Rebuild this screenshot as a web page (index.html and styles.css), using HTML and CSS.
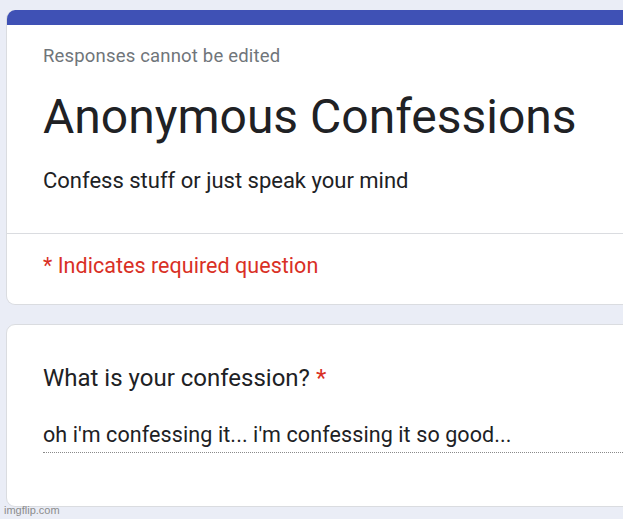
FILE: index.html
```html
<!DOCTYPE html>
<html>
<head>
<meta charset="utf-8">
<link rel="stylesheet" href="styles.css">
</head>
<body>
<div class="page">
  <div class="card header-card">
    <div class="accent"></div>
    <div class="header-body">
      <div class="note">Responses cannot be edited</div>
      <h1 class="title">Anonymous Confessions</h1>
      <div class="desc">Confess stuff or just speak your mind</div>
    </div>
    <div class="required-row">* Indicates required question</div>
  </div>
  <div class="card question-card">
    <div class="question">What is your confession? <span class="star">*</span></div>
    <div class="answer">oh i'm confessing it... i'm confessing it so good...</div>
  </div>
</div>
<div class="watermark">imgflip.com</div>
</body>
</html>
```
FILE: styles.css
```css
html, body {
  margin: 0;
  padding: 0;
  background: #eaedf6;
  overflow: hidden;
  font-family: Roboto, "Liberation Sans", sans-serif;
  color: #202124;
}
.page {
  padding: 10px 0 0 6px;
  display: flex;
  flex-direction: column;
  gap: 19px;
  width: 660px;
}
.card {
  background: #fff;
  border: 1px solid #dadce0;
  border-radius: 9px;
  overflow: hidden;
}
.header-card {
  border-top: none;
}
.accent {
  height: 15px;
  background: #3f51b5;
}
.header-body {
  padding: 19px 36px 38.5px;
  border-bottom: 1px solid #dadce0;
}
.note {
  font-size: 18.5px;
  line-height: 24px;
  color: #70757a;
  letter-spacing: 0.18px;
}
.title {
  margin: 21px 0 0;
  font-size: 48px;
  font-weight: 400;
  line-height: 56px;
}
.desc {
  margin-top: 21.5px;
  font-size: 22px;
  line-height: 28px;
}
.required-row {
  padding: 18px 36px 24px;
  color: #d93025;
  font-size: 21.5px;
  line-height: 28px;
  letter-spacing: 0.04px;
}
.question-card {
  padding: 38px 36px 53px;
}
.question {
  font-size: 24px;
  line-height: 30px;
}
.star { color: #d93025; }
.answer {
  margin-top: 28px;
  font-size: 21.5px;
  line-height: 28px;
  letter-spacing: 0.1px;
  border-bottom: 1px dotted #8a8a8a;
  padding-bottom: 3px;
}
.watermark {
  position: absolute;
  left: 4px;
  bottom: 3px;
  font-family: "Liberation Sans", sans-serif;
  font-size: 11px;
  color: #8c8c8c;
}
```
